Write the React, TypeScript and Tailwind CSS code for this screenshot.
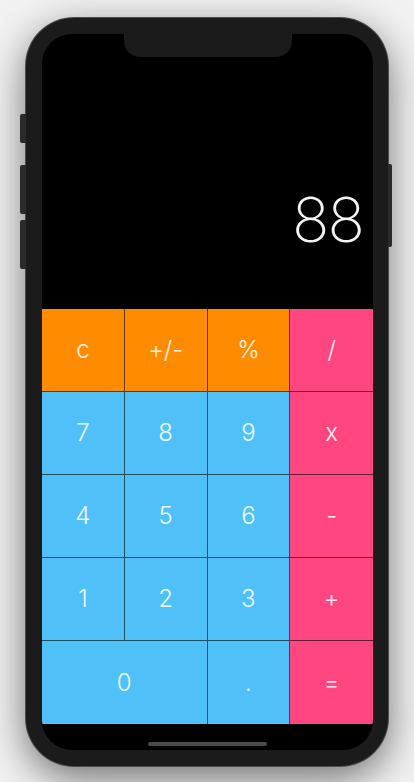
import React from "react";

type Key = { label: string; tone: "orange" | "blue" | "pink"; wide?: boolean };

const keys: Key[] = [
  { label: "c", tone: "orange" },
  { label: "+/-", tone: "orange" },
  { label: "%", tone: "orange" },
  { label: "/", tone: "pink" },
  { label: "7", tone: "blue" },
  { label: "8", tone: "blue" },
  { label: "9", tone: "blue" },
  { label: "x", tone: "pink" },
  { label: "4", tone: "blue" },
  { label: "5", tone: "blue" },
  { label: "6", tone: "blue" },
  { label: "-", tone: "pink" },
  { label: "1", tone: "blue" },
  { label: "2", tone: "blue" },
  { label: "3", tone: "blue" },
  { label: "+", tone: "pink" },
  { label: "0", tone: "blue", wide: true },
  { label: ".", tone: "blue" },
  { label: "=", tone: "pink" },
];

const toneClass = {
  orange: "bg-[#ff8b00]",
  blue: "bg-[#4fc1f8]",
  pink: "bg-[#ff4681]",
};

function CalcKey({ k, lastCol, lastRow }: { k: Key; lastCol: boolean; lastRow: boolean }) {
  return (
    <button
      type="button"
      className={[
        "flex h-[83px] items-center justify-center border-black/60 text-[24px] font-light text-white/90",
        toneClass[k.tone],
        k.wide ? "col-span-2" : "",
        lastCol ? "" : "border-r",
        lastRow ? "" : "border-b",
      ].join(" ")}
    >
      {k.label}
    </button>
  );
}

export default function App() {
  let col = 0;
  const cells = keys.map((k, i) => {
    const span = k.wide ? 2 : 1;
    col += span;
    const lastCol = col % 4 === 0;
    return <CalcKey key={i} k={k} lastCol={lastCol} lastRow={i >= 16} />;
  });

  return (
    <div
      className="flex h-[782px] w-[414px] items-start justify-center bg-[#f2f2f2] pt-[18px]"
      style={{ fontFamily: "Inter, 'Liberation Sans', sans-serif" }}
    >
      <div className="relative h-[748px] w-[362px] rounded-[48px] bg-[#1b1b1b] py-[16px] pl-[16px] pr-[15px] shadow-[0_0_0_1px_#4d4d4d,0_12px_40px_rgba(0,0,0,0.55)]">
        {/* side buttons */}
        <div className="absolute left-[-6px] top-[96px] h-[29px] w-[6px] rounded-l-[2px] bg-[#2a2a2a]" />
        <div className="absolute left-[-6px] top-[147px] h-[49px] w-[6px] rounded-l-[2px] bg-[#2a2a2a]" />
        <div className="absolute left-[-6px] top-[202px] h-[49px] w-[6px] rounded-l-[2px] bg-[#2a2a2a]" />
        <div className="absolute right-[-4px] top-[146px] h-[83px] w-[4px] rounded-r-[2px] bg-[#2a2a2a]" />

        <div className="relative flex h-full w-full flex-col overflow-hidden rounded-[30px] bg-black">
          <div className="absolute left-1/2 top-0 h-[23px] w-[168px] -translate-x-1/2 rounded-b-[16px] bg-[#1b1b1b]" />

          <div className="flex flex-1 items-end justify-end pb-[58px] pr-[10px]">
            <span className="text-[62px] font-extralight leading-none tracking-[-2px] text-[#f5f5f7]">88</span>
          </div>

          <div className="grid grid-cols-4">{cells}</div>

          <div className="flex h-[26px] justify-center pt-[18px]">
            <div className="h-[4px] w-[119px] rounded-full bg-[#4a4a4a]" />
          </div>
        </div>
      </div>
    </div>
  );
}
